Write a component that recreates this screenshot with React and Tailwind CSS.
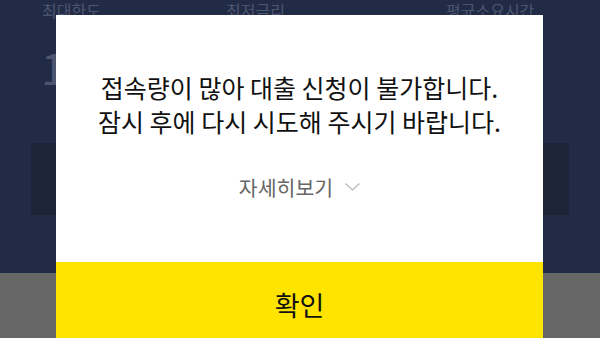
const KR = { fontFamily: '"Noto Sans CJK KR", "Noto Sans", sans-serif' }

export default function App() {
  return (
    <div className="relative w-[600px] h-[338px] overflow-hidden" style={KR}>
      {/* Background page */}
      <div className="h-[273px] bg-[#222b45] px-[31px]">
        <div className="flex items-start h-[20px] text-[16px] leading-[20px] text-[#4d5570]">
          <span className="w-[195px] pl-[11px]">최대한도</span>
          <span className="w-[220px]">최저금리</span>
          <span>평균소요시간</span>
        </div>
        <div className="pl-[10px] mt-[22px] h-[101px] text-[44px] leading-[48px] text-[#4d5570]">1</div>
        <div className="h-[72px] bg-[#1d2438] rounded-[2px]" />
      </div>
      <div className="h-[65px] bg-[#666666]" />

      {/* Modal */}
      <div className="absolute left-[56px] top-[15px] w-[487px] h-[340px] bg-white flex flex-col">
        <div className="flex-1 flex flex-col items-center">
          <div className="mt-[55px] text-center text-[25px] leading-[34px] text-[#111111]">
            <p>접속량이 많아 대출 신청이 불가합니다.</p>
            <p>잠시 후에 다시 시도해 주시기 바랍니다.</p>
          </div>
          <button className="mt-[36px] flex items-center gap-[12px] text-[20.5px] leading-[26px] text-[#666666]">
            자세히보기
            <svg width="15" height="8" viewBox="0 0 15 8" fill="none" stroke="#b8b8b8" strokeWidth="1.2">
              <polyline points="0.5,0.5 7.5,7 14.5,0.5" />
            </svg>
          </button>
        </div>
        <div className="h-[93px] bg-[#ffe400] flex justify-center pt-[25px] text-[27px] leading-[36px] text-[#111111]">
          확인
        </div>
      </div>
    </div>
  )
}
